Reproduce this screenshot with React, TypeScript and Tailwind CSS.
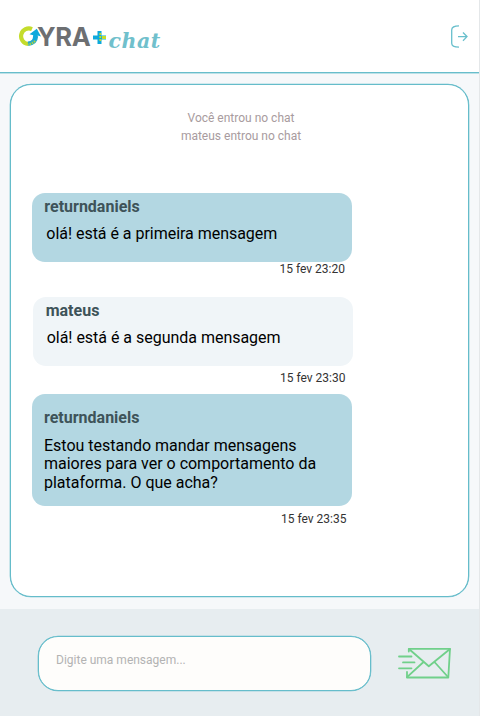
type Message = {
  author: string;
  text: string;
  time: string;
  bubble: string;
  body: string;
  stamp: string;
};

const messages: Message[] = [
  {
    author: "returndaniels",
    text: "olá! está é a primeira mensagem",
    time: "15 fev 23:20",
    bubble: "h-[69px] bg-[#b3d7e2] pl-[12.3px] pt-1",
    body: "mt-[9px] pl-[2px] tracking-[-0.03px]",
    stamp: "mb-[21px] mr-[7px]",
  },
  {
    author: "mateus",
    text: "olá! está é a segunda mensagem",
    time: "15 fev 23:30",
    bubble: "ml-[1.4px] -mr-[1.4px] h-[69px] bg-[#f0f5f8] pl-[12.3px] pt-1",
    body: "mt-[9px] pl-[1px] tracking-[-0.02px]",
    stamp: "mt-[5px] mb-[9.4px] mr-[6.5px]",
  },
  {
    author: "returndaniels",
    text: "Estou testando mandar mensagens maiores para ver o comportamento da plataforma. O que acha?",
    time: "15 fev 23:35",
    bubble: "h-[112px] bg-[#b3d7e2] pl-3 pr-[30px] pt-[14px]",
    body: "mt-[9.2px] tracking-[-0.01px]",
    stamp: "mt-[6px] mr-[5.5px]",
  },
];

function Logo() {
  return (
    <div className="flex h-[30px] items-start">
      <svg className="mt-[1px] h-[21px] w-[23px] shrink-0" viewBox="0 0 23 21" fill="none">
        <path d="M14 3.1A7.8 7.8 0 1 0 10 18" stroke="#c4dc2c" strokeWidth="4.2" />
        <path d="M10 17.8Q17.5 17 18 10" stroke="#24aacb" strokeWidth="4.4" />
        <path d="M9 18.6Q14 18.4 17.5 14.5" stroke="#b5d63a" strokeWidth="2" strokeDasharray="1.5 1" />
        <path d="M11.5 8.3 18.8 2.8 23 10.5 19.8 9.6 18 14H14.5L15.2 9.2Z" fill="#0da9dc" />
      </svg>
      <span className="-ml-[4px] -mt-[1px] w-[54px] whitespace-nowrap font-[Inter] text-[25.5px] font-bold leading-[25px] tracking-[-0.3px] text-[#6d6f72]">YRA</span>
      <svg className="ml-[1.5px] mt-[6px] h-[13px] w-[13px] shrink-0" viewBox="0 0 13 13" fill="none">
        <path d="M6.5 0v13M0 6.5h13" stroke="#0da9dc" strokeWidth="4" />
        <path d="M7.3 2v9" stroke="#c4dc2c" strokeWidth="1.8" strokeDasharray="2 1" />
        <path d="M9 6.5h4" stroke="#c4dc2c" strokeWidth="3" />
      </svg>
      <span className="ml-[3px] mt-[4px] font-['DejaVu_Serif'] text-[20.5px] font-bold italic leading-[24px] tracking-[0.5px] text-[#70c0cc]">chat</span>
    </div>
  );
}

export default function App() {
  return (
    <div className="flex h-[716px] w-[480px] flex-col border-r border-[#e4e7e9] bg-[#f6f8fa] font-[Roboto,sans-serif]">
      <header className="flex h-[73px] shrink-0 items-start justify-between border-b border-[#68bdcb] bg-white pl-[18px] pr-[11px] pt-[25px] shadow-[0_0.4px_0_0_#68bdcb]">
        <Logo />
        <button aria-label="Sair">
          <svg className="h-6 w-[18px]" viewBox="0 0 18 24" fill="none" stroke="#68bfcc" strokeWidth="1.3">
            <path d="M9 .8Q1.7.8 1.7 5v13.2Q1.7 22 9 22.2" />
            <path d="M8 11.6h9M13 7.5l4 4.1-4 4.1" />
          </svg>
        </button>
      </header>

      <main className="ml-[10px] mr-[10px] mt-[11px] h-[513px] shrink-0 rounded-[21px] border border-[#65bcca] bg-white pl-[21px] pt-[25px] shadow-[0_0_0_0.3px_#65bcca]">
        <div className="-ml-[18px] text-center text-[12px] leading-[17.5px] text-[#a89b9e]">
          <p>Você entrou no chat</p>
          <p>mateus entrou no chat</p>
        </div>
        <section className="mt-[48px] flex w-[320px] flex-col">
          {messages.map((message) => (
            <article key={message.time} className="flex flex-col">
              <div className={"shrink-0 rounded-[13px] " + message.bubble}>
                <h2 className="text-[16px] font-bold leading-[19px] text-[#3e5359]">{message.author}</h2>
                <p className={"text-[16px] leading-[18.75px] text-black " + message.body}>{message.text}</p>
              </div>
              <time className={"self-end text-[12px] leading-[14px] text-[#333] " + message.stamp}>{message.time}</time>
            </article>
          ))}
        </section>
      </main>

      <footer className="mt-[12px] flex grow items-start bg-[#e7edf0] pl-[38px] pt-[27px]">
        <input
          className="h-[55px] w-[333px] rounded-[20px] border border-[#66bdcb] bg-[#fefdfb] px-[17px] pb-[7px] text-[12px] shadow-[0_0_0_0.3px_#66bdcb] outline-none placeholder:text-[#b3b3b3]"
          placeholder="Digite uma mensagem..."
        />
        <button aria-label="Enviar" className="ml-[27px] mt-[11px]">
          <svg className="h-8 w-[54px]" viewBox="0 0 54 32" fill="none" stroke="#70d08a" strokeWidth="1.8" strokeLinecap="round" strokeLinejoin="round">
            <path d="M10.8 4.5V1.8H52L50.3 30.5H9V25" />
            <path d="M11 2 30.8 19.2 52 2M9 30.2 25.5 15M50 30 36.5 15M1 9.5h12.5M5 15.4h11.5M1 21.3h12.5" />
          </svg>
        </button>
      </footer>
    </div>
  );
}
